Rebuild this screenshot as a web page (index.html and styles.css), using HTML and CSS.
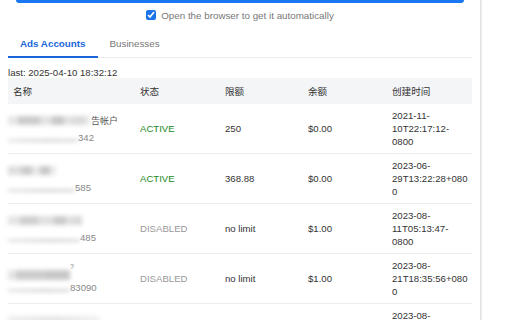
FILE: index.html
```html
<!DOCTYPE html>
<html>
<head>
    <meta charset="UTF-8">
    <meta name="viewport" content="width=device-width, initial-scale=1.0">
    <title>Ads Accounts</title>
    <link rel="stylesheet" href="styles.css">
</head>
<body>
    <div class="popup">
        <div class="fetch-button"></div>
        <label class="auto-open">
            <input type="checkbox" class="auto-check" checked>
            <span>Open the browser to get it automatically</span>
        </label>

        <div class="tabs">
            <div class="tab active">Ads Accounts</div>
            <div class="tab">Businesses</div>
        </div>

        <div class="last-update">last: 2025-04-10 18:32:12</div>

        <table class="account-table">
            <colgroup>
                <col class="col-name">
                <col class="col-status">
                <col class="col-limit">
                <col class="col-balance">
                <col class="col-created">
            </colgroup>
            <thead>
                <tr>
                    <th>名称</th>
                    <th>状态</th>
                    <th>限额</th>
                    <th>余额</th>
                    <th>创建时间</th>
                </tr>
            </thead>
            <tbody>
                <tr>
                    <td class="name-cell">
                        <div class="acc-name"><span class="blur blur-a"></span><span class="name-tail">告帐户</span></div>
                        <div class="acc-id"><span class="blur blur-line w70"></span>342</div>
                    </td>
                    <td class="status-active">ACTIVE</td>
                    <td>250</td>
                    <td>$0.00</td>
                    <td class="created">2021-11-10T22:17:12-0800</td>
                </tr>
                <tr>
                    <td class="name-cell">
                        <div class="acc-name"><span class="blur blur-b"></span></div>
                        <div class="acc-id"><span class="blur blur-line w67"></span>585</div>
                    </td>
                    <td class="status-active">ACTIVE</td>
                    <td>368.88</td>
                    <td>$0.00</td>
                    <td class="created">2023-06-29T13:22:28+0800</td>
                </tr>
                <tr>
                    <td class="name-cell">
                        <div class="acc-name"><span class="blur blur-c"></span></div>
                        <div class="acc-id"><span class="blur blur-line w72"></span>485</div>
                    </td>
                    <td class="status-disabled">DISABLED</td>
                    <td>no limit</td>
                    <td>$1.00</td>
                    <td class="created">2023-08-11T05:13:47-0800</td>
                </tr>
                <tr>
                    <td class="name-cell">
                        <div class="acc-name"><span class="blur blur-d"></span><span class="mark">?</span></div>
                        <div class="acc-id"><span class="blur blur-line w62"></span>83090</div>
                    </td>
                    <td class="status-disabled">DISABLED</td>
                    <td>no limit</td>
                    <td>$1.00</td>
                    <td class="created">2023-08-21T18:35:56+0800</td>
                </tr>
                <tr>
                    <td class="name-cell">
                        <div class="acc-name"><span class="blur blur-e"></span></div>
                        <div class="acc-id"><span class="blur blur-line w62"></span>117</div>
                    </td>
                    <td class="status-disabled">DISABLED</td>
                    <td>no limit</td>
                    <td>$1.00</td>
                    <td class="created">2023-08-24T02:10:33-0800</td>
                </tr>
            </tbody>
        </table>
    </div>
</body>
</html>
```

FILE: styles.css
```css
body {
    margin: 0;
    padding: 0;
    font-family: "Liberation Sans", Arial, "Noto Sans CJK SC", sans-serif;
    font-size: 9.6px;
    color: #333;
    background-color: #fff;
    overflow: hidden;
}
.popup {
    width: 481px;
    height: 320px;
    overflow: hidden;
    box-sizing: border-box;
    padding: 0 8px;
    border-right: 1px solid #e2e2e2;
    box-shadow: 1px 0 1px #f0f0f0;
}
.fetch-button {
    height: 3px;
    margin: 0 8px;
    background-color: #1a77f2;
    border-radius: 0 0 3px 3px;
}
.auto-open {
    display: flex;
    align-items: center;
    justify-content: center;
    gap: 5px;
    height: 12px;
    margin-top: 6px;
    color: #777;
    font-size: 9.8px;
}
.auto-check {
    width: 10px;
    height: 10px;
    margin: 0;
    accent-color: #1a73e8;
}
.tabs {
    display: flex;
    width: 464px;
    margin-top: 14px;
    border-bottom: 1px solid #ececec;
}
.tab {
    padding: 0 12px;
    height: 22px;
    line-height: 18px;
    color: #777;
    font-size: 9.8px;
}
.tab.active {
    color: #1a66d9;
    font-weight: bold;
    border-bottom: 2px solid #1a66d9;
    margin-bottom: -1px;
    height: 21px;
}
.last-update {
    margin-top: 8px;
    height: 13px;
    line-height: 13px;
    color: #333;
}
.account-table {
    width: 464px;
    table-layout: fixed;
    border-collapse: collapse;
    margin-top: -1px;
}
.col-name { width: 127px; }
.col-status { width: 85px; }
.col-limit { width: 83px; }
.col-balance { width: 84px; }
.col-created { width: 85px; }
.account-table th {
    background-color: #f4f5f7;
    height: 26px;
    padding: 0 5px;
    line-height: 13px;
    text-align: left;
    font-weight: normal;
    font-family: "Noto Sans CJK SC", sans-serif;
    font-size: 9.6px;
    color: #333;
}
.account-table td {
    padding: 5px 5px;
    line-height: 13px;
    height: 38px;
    border-bottom: 1px solid #ececec;
    vertical-align: middle;
}
.account-table td.name-cell {
    padding-left: 0;
}
.account-table td.created {
    padding-right: 3px;
    overflow-wrap: anywhere;
}
.status-active {
    color: #1b8a1b;
}
.status-disabled {
    color: #999;
}
.acc-name {
    height: 17px;
    display: flex;
    align-items: center;
}
.name-tail {
    font-family: "Noto Sans CJK SC", sans-serif;
    font-size: 9px;
    color: #555;
    margin-left: 1px;
}
.acc-id {
    height: 16px;
    display: flex;
    align-items: center;
    color: #888;
}
.mark {
    color: #777;
    font-size: 7px;
    margin-top: -8px;
}
.blur {
    display: inline-block;
    height: 9px;
    filter: blur(2px);
}
.blur-line {
    height: 3px;
    margin-top: 6px;
    background: linear-gradient(90deg, #e2e2e2, #d2d2d2 60%, #dadada);
}
.w70 { width: 70px; }
.w67 { width: 67px; }
.w72 { width: 72px; }
.w62 { width: 62px; }
.blur-a {
    width: 82px;
    background: linear-gradient(90deg, #e6e6e6 0, #e6e6e6 10px, #cccccc 10px, #cccccc 32px, #e2e2e2 32px, #e2e2e2 44px, #c8c8c8 44px, #c8c8c8 56px, #e4e4e4 56px, #d8d8d8 74px, #efefef 82px);
}
.blur-b {
    width: 48px;
    background: linear-gradient(90deg, #dcdcdc 0, #dcdcdc 8px, #e8e8e8 8px, #cbcbcb 16px, #cbcbcb 24px, #e8e8e8 24px, #e8e8e8 32px, #c8c8c8 32px, #c8c8c8 42px, #eaeaea 42px, #eaeaea 48px);
}
.blur-c {
    width: 74px;
    background: linear-gradient(90deg, #e4e4e4 0, #e4e4e4 12px, #cfcfcf 12px, #cfcfcf 30px, #e0e0e0 30px, #e0e0e0 46px, #cbcbcb 46px, #cbcbcb 58px, #e2e2e2 58px, #d6d6d6 74px);
}
.blur-d {
    width: 62px;
    height: 10px;
    margin-top: 8px;
    background: linear-gradient(90deg, #e4e4e4 0, #e4e4e4 8px, #cdcdcd 8px, #cdcdcd 38px, #c8c8c8 38px, #c8c8c8 62px);
}
.blur-e {
    width: 92px;
    background: linear-gradient(90deg, #efefef, #e6e6e6 50%, #f2f2f2);
}
```
